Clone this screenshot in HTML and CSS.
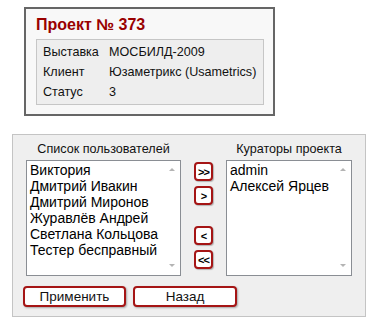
FILE: index.html
```html
<!DOCTYPE html>
<html lang="ru">
<head>
    <meta charset="UTF-8">
    <title>Проект № 373</title>
    <link rel="stylesheet" href="styles.css">
</head>
<body>

    <div class="project">
        <h1>Проект № 373</h1>
        <table class="info">
            <tr><td class="key">Выставка</td><td>МОСБИЛД-2009</td></tr>
            <tr><td class="key">Клиент</td><td>Юзаметрикс (Usametrics)</td></tr>
            <tr><td class="key">Статус</td><td>3</td></tr>
        </table>
    </div>

    <div class="users">
        <div class="columns">
            <div class="col col-left">
                <div class="caption">Список пользователей</div>
                <div class="listbox">
                    <ul>
                        <li>Виктория</li>
                        <li>Дмитрий Ивакин</li>
                        <li>Дмитрий Миронов</li>
                        <li>Журавлёв Андрей</li>
                        <li>Светлана Кольцова</li>
                        <li>Тестер бесправный</li>
                    </ul>
                    <div class="scroll"><span class="up"></span><span class="down"></span></div>
                </div>
            </div>

            <div class="moves">
                <button class="mv">&gt;&gt;</button>
                <button class="mv">&gt;</button>
                <button class="mv mv-back">&lt;</button>
                <button class="mv">&lt;&lt;</button>
            </div>

            <div class="col col-right">
                <div class="caption">Кураторы проекта</div>
                <div class="listbox">
                    <ul>
                        <li>admin</li>
                        <li>Алексей Ярцев</li>
                    </ul>
                    <div class="scroll"><span class="up"></span><span class="down"></span></div>
                </div>
            </div>
        </div>

        <div class="actions">
            <button class="btn btn-apply">Применить</button>
            <button class="btn btn-back">Назад</button>
        </div>
    </div>

</body>
</html>
```

FILE: styles.css
```css
body {
    font-family: 'Liberation Sans', Arial, sans-serif;
    background-color: #fff;
    color: #000;
    margin: 0;
    padding: 0;
}
.project {
    box-sizing: border-box;
    width: 251px;
    height: 109px;
    margin: 7px 0 0 24px;
    padding: 6px 10px 0 10px;
    border: 2px solid #666;
    background-color: #f8f8f8;
}
.project h1 {
    margin: 0 0 5px 0;
    font-size: 16px;
    line-height: 19px;
    color: #990000;
}
.info {
    width: 228px;
    border: 1px solid #c6c6c6;
    border-collapse: separate;
    border-spacing: 0;
    padding: 2px 0;
    background-color: #eeeeee;
    font-size: 12.6px;
    color: #111;
}
.info td {
    height: 20px;
    padding: 0;
}
.info td.key {
    width: 66px;
    padding-left: 6px;
}
.users {
    box-sizing: border-box;
    width: 354px;
    height: 183px;
    margin: 18px 0 0 12px;
    padding: 7px 0 0 13px;
    border: 1px solid #c4c4c4;
    background-color: #efefef;
}
.columns {
    display: flex;
}
.caption {
    font-size: 12.6px;
    line-height: 14px;
    height: 14px;
    margin-bottom: 4px;
    text-align: center;
    color: #111;
}
.col-left .listbox {
    width: 155px;
}
.col-right .listbox {
    width: 126px;
}
.listbox {
    box-sizing: border-box;
    height: 116px;
    border: 1px solid #8a8e94;
    background-color: #fff;
    display: flex;
}
.listbox ul {
    flex: 1;
    list-style: none;
    margin: 0;
    padding: 1px 0 0 3px;
    font-size: 14px;
    line-height: 16px;
}
.scroll {
    width: 17px;
    display: flex;
    flex-direction: column;
    justify-content: space-between;
    align-items: center;
    padding: 7px 0 8px 0;
}
.scroll span {
    width: 0;
    height: 0;
    border-left: 3px solid transparent;
    border-right: 3px solid transparent;
}
.scroll .up {
    border-bottom: 3px solid #b4b4b4;
}
.scroll .down {
    border-top: 3px solid #b4b4b4;
}
.moves {
    display: flex;
    flex-direction: column;
    gap: 5px;
    padding: 20px 0 0 0;
    margin: 0 13px;
}
.mv {
    box-sizing: border-box;
    width: 19px;
    height: 19px;
    padding: 0;
    border: 2px solid #a51515;
    border-radius: 4px;
    background-color: #fff;
    box-shadow: 1px 1px 1px rgba(0, 0, 0, 0.25);
    font-family: 'Liberation Sans', Arial, sans-serif;
    font-size: 11px;
    font-weight: bold;
    letter-spacing: -1px;
    color: #000;
}
.mv-back {
    margin-top: 16px;
}
.actions {
    display: flex;
    gap: 7px;
    margin: 10px 0 0 -3px;
}
.btn {
    box-sizing: border-box;
    height: 21px;
    padding: 0;
    border: 2px solid #a51515;
    border-radius: 4px;
    background-color: #fff;
    box-shadow: 1px 1px 2px rgba(0, 0, 0, 0.3);
    font-family: 'Liberation Sans', Arial, sans-serif;
    font-size: 13.5px;
    color: #111;
}
.btn-apply {
    width: 103px;
}
.btn-back {
    width: 104px;
}
```
